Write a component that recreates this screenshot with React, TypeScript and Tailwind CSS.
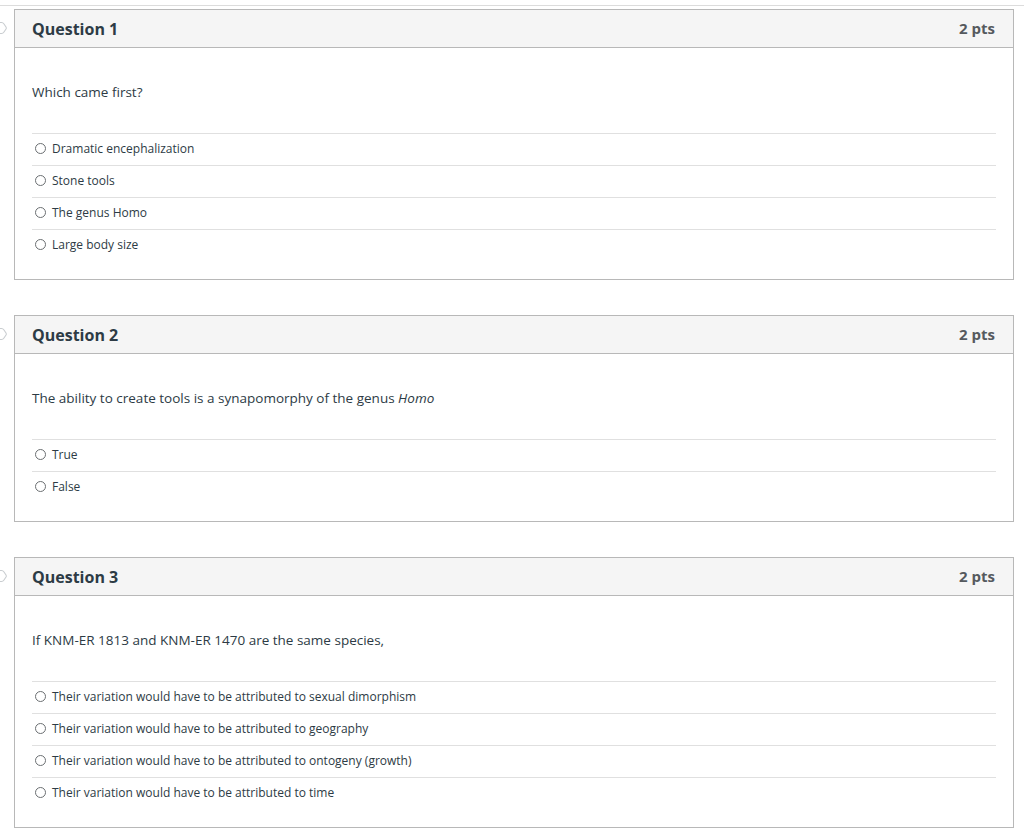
import type { ReactNode } from "react";

type Question = {
  title: string;
  points: string;
  prompt: ReactNode;
  answers: string[];
};

const questions: Question[] = [
  {
    title: "Question 1",
    points: "2 pts",
    prompt: "Which came first?",
    answers: ["Dramatic encephalization", "Stone tools", "The genus Homo", "Large body size"],
  },
  {
    title: "Question 2",
    points: "2 pts",
    prompt: (
      <>
        The ability to create tools is a synapomorphy of the genus <em>Homo</em>
      </>
    ),
    answers: ["True", "False"],
  },
  {
    title: "Question 3",
    points: "2 pts",
    prompt: "If KNM-ER 1813 and KNM-ER 1470 are the same species,",
    answers: [
      "Their variation would have to be attributed to sexual dimorphism",
      "Their variation would have to be attributed to geography",
      "Their variation would have to be attributed to ontogeny (growth)",
      "Their variation would have to be attributed to time",
    ],
  },
];

function FlagIcon() {
  return (
    <svg
      className="absolute left-[-9px] top-[11px]"
      width="16"
      height="16"
      viewBox="0 0 16 16"
      fill="none"
    >
      <path
        d="M4 2.5 L10.5 2.5 Q12 2.5 13 4 L15 7 Q15.6 8 15 9 L13 12 Q12 13.5 10.5 13.5 L4 13.5 Z"
        stroke="#c9cdd0"
        strokeWidth="1.1"
        strokeLinejoin="round"
      />
    </svg>
  );
}

function QuestionCard({ q }: { q: Question }) {
  return (
    <div className="relative">
      <FlagIcon />
      <div className="ml-[14px] mr-[10px] border border-[#b8b8b8] bg-white">
        <div className="flex h-[38px] items-center justify-between border-b border-[#b8b8b8] bg-[#f5f5f5] pl-[17px] pr-[18px]">
          <span className="text-[16px] font-bold text-[#2d3b45]">{q.title}</span>
          <span className="text-[15px] font-bold text-[#555a5e]">{q.points}</span>
        </div>
        <div className="px-[17px] pt-[34px] pb-[18px]">
          <p className="mb-[31px] text-[13.5px] leading-[20px] text-[#2d3b45]">{q.prompt}</p>
          {q.answers.map((a) => (
            <div key={a} className="flex h-[32px] items-center border-t border-[#e0e0e0] pb-[2px]">
              <span className="ml-[3px] h-[11px] w-[11px] rounded-full border border-[#6b6f72]" />
              <span className="ml-[6px] text-[12px] text-[#2d3b45]">{a}</span>
            </div>
          ))}
        </div>
      </div>
    </div>
  );
}

export default function App() {
  return (
    <div
      className="min-h-screen overflow-hidden bg-white pt-[5px]"
      style={{ fontFamily: '"Open Sans", "Liberation Sans", sans-serif' }}
    >
      <div className="h-px bg-[#dcdcdc]" />
      <div className="mt-[3px] flex flex-col gap-[35px]">
        {questions.map((q) => (
          <QuestionCard key={q.title} q={q} />
        ))}
      </div>
    </div>
  );
}
